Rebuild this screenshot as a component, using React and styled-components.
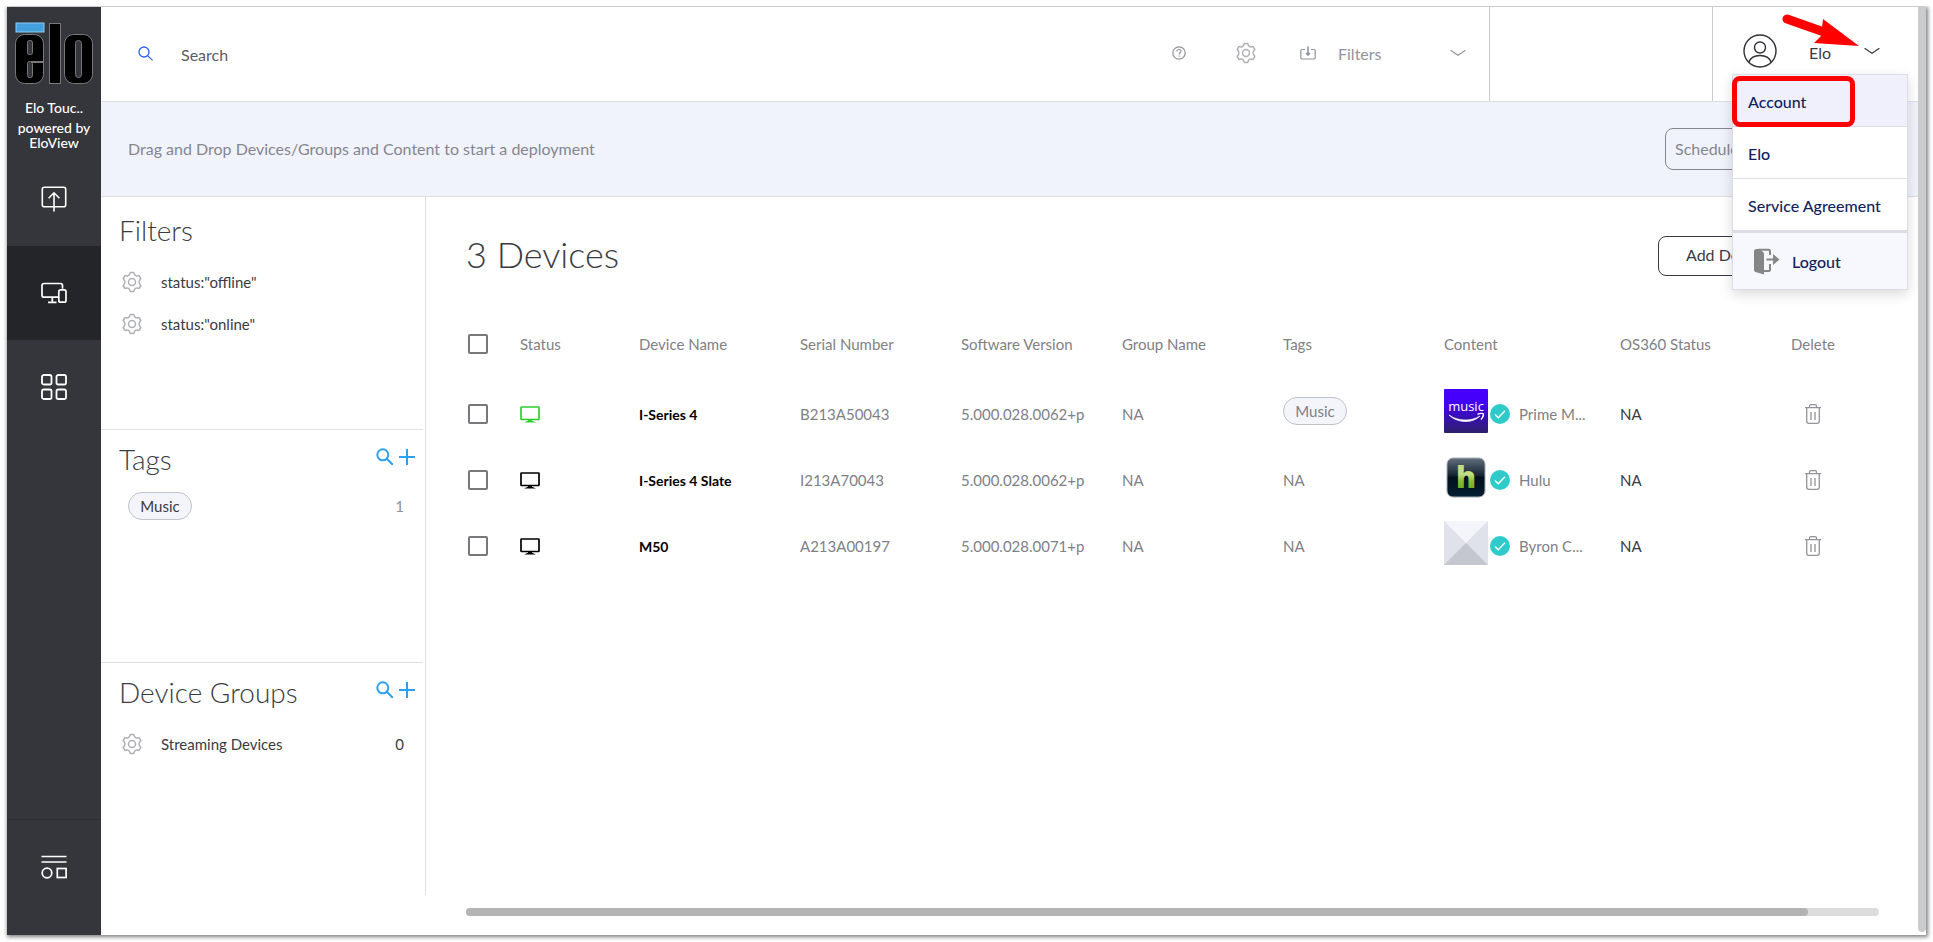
import React, { useState } from "react";
import styled, { createGlobalStyle } from "styled-components";

const GlobalStyle = createGlobalStyle`
  * {
    box-sizing: border-box;
  }
  body {
    margin: 0;
    background: #ffffff;
    color: #3a3b42;
    font-family: Lato, "Open Sans", sans-serif;
    font-size: 15px;
  }
  button, input, select {
    font: inherit;
    color: inherit;
  }
  button {
    padding: 0;
    border: 0;
    background: none;
    cursor: pointer;
  }
`;

const Page = styled.div`
  height: 100vh;
  min-height: 700px;
  padding: 7px;
`;

const Frame = styled.div`
  display: flex;
  height: 100%;
  background: #ffffff;
  box-shadow: 1px 1px 4px 1px rgba(0, 0, 0, 0.5);
  clip-path: inset(-1px -7px -7px -4px);
`;

const Sidebar = styled.nav`
  display: flex;
  flex-direction: column;
  flex: none;
  width: 94px;
  padding-bottom: 21px;
  background: #35363b;
  color: #ffffff;
`;

const Brand = styled.div`
  display: flex;
  flex-direction: column;
  align-items: center;
  height: 145px;
  padding-top: 15px;
  font-size: 14px;
  font-weight: 500;
  line-height: 15px;
  text-align: center;
`;

const BrandName = styled.div`
  margin: 14px 0 5px;
`;

const NavButton = styled.button`
  display: flex;
  align-items: center;
  justify-content: center;
  height: 94px;
  background: ${(p) => (p.$active ? "#242529" : "transparent")};
`;

const NavSpacer = styled.div`
  flex: 1;
  border-bottom: 1px solid #2e2f34;
`;

const Content = styled.div`
  display: flex;
  flex-direction: column;
  flex: 1;
  min-width: 0;
`;

const Header = styled.header`
  display: flex;
  flex: none;
  height: 95px;
  border-bottom: 1px solid #dfdfdf;
`;

const SearchBox = styled.label`
  display: flex;
  align-items: center;
  flex: 1;
  gap: 28px;
  padding: 0 0 2px 37px;
`;

const SearchInput = styled.input`
  width: 300px;
  padding: 3px 0 0;
  border: 0;
  outline: 0;
  background: none;
  font-size: 16px;
  &::placeholder {
    color: #5c5d63;
    opacity: 1;
  }
`;

const Tools = styled.div`
  display: flex;
  align-items: center;
  gap: 41px;
  padding: 0 23px 2px 0;
  color: #92939b;
`;

const ToolButton = styled.button`
  display: flex;
  align-items: center;
  justify-content: center;
  width: 26px;
  height: 26px;
`;

const FilterPicker = styled.label`
  display: flex;
  align-items: center;
  width: 166px;
`;

const FilterSelect = styled.select`
  flex: 1;
  margin-left: 22px;
  padding: 0;
  border: 0;
  appearance: none;
  background: none;
  font-size: 16px;
`;

const HeaderCell = styled.div`
  width: 223px;
  border-left: 1px solid #cccccc;
`;

const UserCell = styled.div`
  position: relative;
  width: 206px;
  border-left: 1px solid #cccccc;
`;

const UserButton = styled.button`
  display: flex;
  align-items: center;
  width: 100%;
  height: 88px;
  padding: 0 38px 0 30px;
  font-size: 16px;
`;

const UserName = styled.span`
  flex: 1;
  padding: 2px 0 0 32px;
  text-align: left;
`;

const Menu = styled.ul`
  position: absolute;
  z-index: 2;
  top: 67px;
  right: 10px;
  width: 176px;
  margin: 0;
  padding: 0;
  border: 1px solid #dcdde6;
  background: #ffffff;
  box-shadow: 0 4px 12px rgba(0, 0, 0, 0.15);
  list-style: none;
`;

const MenuItem = styled.li`
  position: relative;
  height: ${(p) => (p.$last ? 58 : 52)}px;
  border-top: ${(p) => (p.$last ? 2 : 0)}px solid #dcdde6;
  border-bottom: ${(p) => (p.$last ? 0 : 1)}px solid #dcdde6;
  background: ${(p) => p.$bg || "#ffffff"};
`;

const MenuLink = styled.a`
  display: flex;
  align-items: center;
  gap: 12px;
  height: 100%;
  padding: ${(p) => (p.$icon ? "0 0 0 20px" : "2px 0 0 15px")};
  color: #14235c;
  font-size: 16px;
  font-weight: 500;
  text-decoration: none;
  white-space: nowrap;
`;

const Highlight = styled.span`
  position: absolute;
  z-index: 3;
  top: 1px;
  left: -1px;
  width: 123px;
  height: 51px;
  border: 5px solid #fe0000;
  border-radius: 8px;
  pointer-events: none;
`;

const Arrow = styled.svg`
  position: absolute;
  z-index: 3;
  top: 6px;
  left: 69px;
  pointer-events: none;
`;

const Banner = styled.div`
  display: flex;
  align-items: center;
  justify-content: space-between;
  flex: none;
  height: 95px;
  padding: 0 39px 0 27px;
  border-bottom: 1px solid #dfdfdf;
  background: #f0f3fc;
  color: #85868f;
  font-size: 16px;
`;

const BannerText = styled.p`
  margin: 0;
  padding-bottom: 2px;
`;

const OutlineButton = styled.button`
  height: ${(p) => p.$height}px;
  width: ${(p) => p.$width}px;
  padding: 0 0 2px ${(p) => p.$pad}px;
  border: 1px solid currentColor;
  border-radius: 8px;
  font-size: 16px;
  text-align: left;
`;

const Body = styled.div`
  display: flex;
  flex: 1;
  min-height: 0;
`;

const Panel = styled.aside`
  display: flex;
  flex-direction: column;
  flex: none;
  width: 325px;
  margin-bottom: 40px;
  border-right: 1px solid #dfdfdf;
`;

const Section = styled.section`
  flex: 1;
  margin-right: 2px;
  padding: 0 7px 0 18px;
  border-bottom: 1px solid #dfdfdf;
  &:last-child {
    border-bottom: 0;
  }
`;

const SectionHead = styled.div`
  display: flex;
  align-items: center;
  height: ${(p) => (p.$first ? 64 : 60)}px;
  padding-top: ${(p) => (p.$first ? 4 : 0)}px;
`;

const SectionTitle = styled.h2`
  flex: 1;
  margin: 0;
  padding-bottom: 2px;
  font-size: 28px;
  font-weight: 300;
`;

const IconButton = styled.button`
  display: flex;
  margin: 0 0 6px 4px;
  color: #2f9ff0;
`;

const PanelRow = styled.div`
  display: flex;
  align-items: center;
  height: ${(p) => (p.$chip ? 32 : 42)}px;
  padding: 0 12px 0 ${(p) => (p.$chip ? 9 : 3)}px;
`;

const RowLabel = styled.span`
  flex: 1;
  padding-left: 19px;
`;

const RowCount = styled.span`
  margin-left: auto;
  color: ${(p) => (p.$muted ? "#8f9097" : "inherit")};
`;

const Chip = styled.span`
  display: flex;
  align-items: center;
  justify-content: center;
  width: 64px;
  height: 28px;
  border: 1px solid #c0c2cc;
  border-radius: 14px;
  background: #f4f5fb;
`;

const Main = styled.main`
  display: flex;
  flex-direction: column;
  flex: 1;
  min-width: 0;
  padding: 0 39px 19px 40px;
`;

const TitleBar = styled.div`
  display: flex;
  align-items: center;
  justify-content: space-between;
  height: 117px;
  flex: none;
`;

const Title = styled.h1`
  margin: 0;
  padding-bottom: 4px;
  font-size: 36px;
  font-weight: 300;
`;

const DeviceTable = styled.table`
  width: 100%;
  border-collapse: collapse;
  table-layout: fixed;
  color: #808186;
`;

const HeadCell = styled.th`
  width: ${(p) => p.$width}px;
  height: 67px;
  padding: 0 0 8px;
  font-weight: 400;
  text-align: left;
  white-space: nowrap;
`;

const Cell = styled.td`
  height: 66px;
  padding: 0;
  color: ${(p) => p.$color || "inherit"};
  font-size: ${(p) => (p.$bold ? 14 : 15)}px;
  font-weight: ${(p) => (p.$bold ? 700 : 400)};
  white-space: nowrap;
  > svg {
    display: block;
  }
  ${Chip} {
    margin-bottom: 6px;
  }
`;

const Check = styled.input`
  display: block;
  width: 20px;
  height: 20px;
  margin: 0 0 0 2px;
  border: 2px solid #77787c;
  border-radius: 2px;
  appearance: none;
  &:checked {
    background: #77787c;
  }
`;

const ContentCell = styled.div`
  display: flex;
  align-items: center;
`;

const Thumb = styled.svg`
  flex: none;
  margin: 0 2px 6px 0;
`;

const ContentName = styled.span`
  margin-left: 9px;
`;

const DeleteButton = styled.button`
  display: flex;
  justify-content: center;
  width: 44px;
  color: #92939b;
`;

const ScrollTrack = styled.div`
  height: 8px;
  margin-top: auto;
  border-radius: 4px;
  background: #dcdcdc;
`;

const ScrollThumb = styled.div`
  width: 95%;
  height: 8px;
  border-radius: 4px;
  background: #b4b4b4;
`;

const PageScroll = styled.div`
  flex: none;
  width: 8px;
  margin-bottom: 3px;
  border-radius: 0 0 4px 4px;
  background: #cbccce;
`;

const Logo = () => (
  <svg width="80" height="64" viewBox="14 22 80 64" role="img" aria-label="elo">
    <rect x="16" y="23" width="28" height="9" fill="#44a0dc" stroke="#8ccbf2" />
    <g fill="#000" stroke="#77787c">
      <rect x="15.5" y="34.5" width="28" height="49" rx="9" />
      <rect x="49.5" y="23.5" width="11" height="60" />
      <rect x="64.5" y="34.5" width="28" height="49" rx="9" />
    </g>
    <g fill="#35363b" stroke="#77787c">
      <rect x="27.5" y="40.5" width="5" height="14" rx="2" />
      <rect x="27.5" y="61.5" width="5" height="16" rx="2" />
      <rect x="75.5" y="40.5" width="6" height="37" rx="3" />
    </g>
    <rect x="31" y="61" width="13" height="2" fill="#77787c" />
  </svg>
);

const DeployIcon = () => (
  <svg width="26" height="26" viewBox="0 0 26 26" fill="none" stroke="#fff" strokeWidth="1.6">
    <rect x="1.3" y="1.3" width="23.4" height="19.4" rx="2" />
    <path d="M13 25.5V7M7.6 12.2 13 6.8l5.4 5.4" />
  </svg>
);

const DevicesIcon = () => (
  <svg width="26" height="22" viewBox="0 0 26 22" fill="none" stroke="#fff" strokeWidth="1.7">
    <path d="M17.5 15.2H3a2 2 0 0 1-2-2V3.5a2 2 0 0 1 2-2h16.5a2 2 0 0 1 2 2v3.2M11.3 15.2V20M7 20.3h8.5" />
    <rect x="17.8" y="7.8" width="7.2" height="12.4" rx="1.8" />
  </svg>
);

const GridIcon = () => (
  <svg width="26" height="26" viewBox="0 0 26 26" fill="none" stroke="#fff" strokeWidth="1.8">
    <rect x="1" y="1" width="9.5" height="9.5" rx="1.8" />
    <rect x="15.5" y="1" width="9.5" height="9.5" rx="1.8" />
    <rect x="1" y="15.5" width="9.5" height="9.5" rx="1.8" />
    <rect x="15.5" y="15.5" width="9.5" height="9.5" rx="1.8" />
  </svg>
);

const LayoutIcon = () => (
  <svg width="26" height="24" viewBox="0 0 26 24" fill="none" stroke="#fff" strokeWidth="1.7">
    <path d="M.5 1.5h25M.5 7h25" />
    <circle cx="6" cy="18" r="4.8" />
    <rect x="16.3" y="13.5" width="8.8" height="9" />
  </svg>
);

const SearchIcon = () => (
  <svg width="15" height="15" viewBox="0 0 15 15" fill="none" stroke="#2d62f0" strokeWidth="1.3">
    <circle cx="6" cy="6" r="5" />
    <path d="m9.6 9.6 5 4.8" />
  </svg>
);

const HelpIcon = () => (
  <svg width="14" height="14" viewBox="0 0 14 14" fill="none" stroke="currentColor" strokeWidth="1.2">
    <circle cx="7" cy="7" r="6.2" />
    <path d="M5 5.5c0-1.3.9-2 2-2s2 .7 2 1.8c0 1.5-1.9 1.5-1.9 3.2M7 9.5v1.2" />
  </svg>
);

const GearIcon = () => (
  <svg width="20" height="22" viewBox="0 0 20 22" fill="none" stroke="#b0b1b7" strokeWidth="1.5">
    <path
      d="M8.3 1.5h3.4l.9 2.2c.5.9 1.3 1.3 2.3 1.2l2.2-.3 1.7 2.900-1.300 1.800c-.7 1.100-.7 2.300 0 3.400l1.300 1.800-1.700 2.900-2.200-.3c-1-.1-1.800.3-2.300 1.200l-.9 2.200H8.300l-.9-2.200c-.5-.9-1.300-1.300-2.300-1.200l-2.200.3-1.700-2.900 1.300-1.800c.7-1.100.7-2.300 0-3.400L1.200 7.500l1.700-2.900 2.200.3c1 .1 1.800-.3 2.300-1.200z"
      strokeLinejoin="round"
    />
    <circle cx="10" cy="11" r="3.5" />
  </svg>
);

const InboxIcon = () => (
  <svg width="16" height="14" viewBox="0 0 16 14" fill="none" stroke="currentColor" strokeWidth="1.2">
    <path d="M5 3.5H2A1.2 1.2 0 0 0 .8 4.7v7.1A1.2 1.2 0 0 0 2 13h12a1.2 1.2 0 0 0 1.2-1.2V4.7A1.2 1.2 0 0 0 14 3.5h-3" />
    <path d="M8 .5v8M6 7l2 2 2-2" strokeWidth="1.6" />
  </svg>
);

const Chevron = () => (
  <svg width="16" height="8" viewBox="0 0 16 8" fill="none" stroke="currentColor" strokeWidth="1.2">
    <path d="m.6 1.200 7.400 5 7.400-5" />
  </svg>
);

const AvatarIcon = () => (
  <svg width="34" height="34" viewBox="0 0 34 34" fill="none" stroke="#2f3036" strokeWidth="1.4">
    <circle cx="17" cy="17" r="16" />
    <circle cx="17" cy="13.5" r="5.5" />
    <path d="M5.8 28.3C7.5 23.8 11.8 21.5 17 21.5s9.5 2.3 11.2 6.8" />
  </svg>
);

const LogoutIcon = () => (
  <svg width="27" height="27" viewBox="0 0 27 27" fill="none">
    <path d="M1 3.5A2.5 2.5 0 0 1 3.5 1H6l4 3a2 2 0 0 1 1 2v20.5L2.5 24A2 2 0 0 1 1 22z" fill="#868686" />
    <path d="M5 1.8h10.5A1.5 1.5 0 0 1 17 3.3V7M17 16v5.5a1.5 1.5 0 0 1-1.5 1.5H11" stroke="#868686" strokeWidth="2" />
    <path d="M13.5 10.5H20V6l6.5 5.5L20 17v-4.5h-6.5z" fill="#868686" />
  </svg>
);

const PanelSearchIcon = () => (
  <svg width="18" height="18" viewBox="0 0 18 18" fill="none" stroke="currentColor" strokeWidth="2">
    <circle cx="6.8" cy="6.8" r="5.5" />
    <path d="m10.8 10.8 6 6" />
  </svg>
);

const PlusIcon = () => (
  <svg width="18" height="18" viewBox="0 0 18 18" stroke="currentColor" strokeWidth="2">
    <path d="M9 1v16M1 9h16" />
  </svg>
);

const MonitorIcon = ({ color }) => (
  <svg width="20" height="17" viewBox="0 0 20 17">
    <rect x="1" y="1" width="18" height="12.5" rx=".5" fill="none" stroke={color} strokeWidth="1.7" />
    <path d="M8 13.5h4v1.3l4 1.700H4l4-1.700z" fill={color} />
  </svg>
);

const CheckBadge = () => (
  <svg width="20" height="20" viewBox="0 0 20 20" fill="none">
    <circle cx="10" cy="10" r="10" fill="#2fcbcb" />
    <path d="m5 10.5 3.300 3.300L15 6.800" stroke="#fff" strokeWidth="1.4" />
  </svg>
);

const TrashIcon = () => (
  <svg width="16" height="20" viewBox="0 0 16 20" fill="none" stroke="currentColor" strokeWidth="1.3">
    <path d="M0 3.7h16M4.5 3.5V2A1.3 1.3 0 0 1 5.8.7h4.4A1.3 1.3 0 0 1 11.5 2v1.5" />
    <path d="M1.7 4v13A2.3 2.3 0 0 0 4 19.3h8a2.3 2.3 0 0 0 2.3-2.3V4M6 8v8M10 8v8" />
  </svg>
);

const MusicThumb = () => (
  <Thumb width="44" height="44" viewBox="0 0 44 44">
    <defs>
      <linearGradient id="prime" x1="0" y1="0" x2="0" y2="1">
        <stop offset=".3" stopColor="#4400fa" />
        <stop offset="1" stopColor="#2c2068" />
      </linearGradient>
    </defs>
    <rect width="44" height="44" rx="1" fill="url(#prime)" />
    <text x="22" y="22" fill="#fff" fontSize="13" fontFamily="Open Sans" textAnchor="middle">
      music
    </text>
    <path d="M5 26c8 6 22 7 31 1-8 8-23 7-31-1z" fill="#fff" stroke="#fff" strokeWidth=".7" />
    <path d="M33.5 25.3c3-1.4 5.6-1 5.8-.5.3.8-.5 3.7-2.3 5.7" fill="none" stroke="#fff" strokeWidth="1.3" />
  </Thumb>
);

const HuluThumb = () => (
  <Thumb width="44" height="44" viewBox="0 0 44 44">
    <defs>
      <linearGradient id="hulu" x1="0" y1="0" x2="0" y2="1">
        <stop offset="0" stopColor="#63717f" />
        <stop offset=".45" stopColor="#15232f" />
        <stop offset=".5" stopColor="#020f1b" />
        <stop offset="1" stopColor="#032033" />
      </linearGradient>
      <linearGradient id="huluLetter" x1="0" y1="0" x2="0" y2="1">
        <stop offset=".45" stopColor="#c2dd82" />
        <stop offset=".6" stopColor="#8cbe36" />
        <stop offset="1" stopColor="#4f9c0c" />
      </linearGradient>
    </defs>
    <rect x="3" y="3" width="38" height="39" rx="6" fill="url(#hulu)" stroke="#a8aeb5" />
    <text x="22" y="33" fill="url(#huluLetter)" fontSize="30" fontWeight="800" fontFamily="Open Sans" textAnchor="middle">
      h
    </text>
  </Thumb>
);

const BlankThumb = () => (
  <Thumb width="44" height="44" viewBox="0 0 44 44">
    <rect width="44" height="44" fill="#dfe2ea" />
    <path d="M0 0h44L22 22z" fill="#f3f5fa" />
    <path d="M0 44h44L22 22z" fill="#c4c6d0" />
  </Thumb>
);

const columns = [
  ["Status", 119],
  ["Device Name", 161],
  ["Serial Number", 161],
  ["Software Version", 161],
  ["Group Name", 161],
  ["Tags", 161],
  ["Content", 176],
  ["OS360 Status", 171],
  ["Delete", 88],
];

const devices = [
  {
    name: "I-Series 4",
    serial: "B213A50043",
    version: "5.000.028.0062+p",
    online: true,
    tag: "Music",
    content: "Prime M...",
    thumb: <MusicThumb />,
  },
  {
    name: "I-Series 4 Slate",
    serial: "I213A70043",
    version: "5.000.028.0062+p",
    content: "Hulu",
    thumb: <HuluThumb />,
  },
  {
    name: "M50",
    serial: "A213A00197",
    version: "5.000.028.0071+p",
    content: "Byron C...",
    thumb: <BlankThumb />,
  },
];

const SectionTools = ({ name }) => (
  <>
    <IconButton aria-label={`Search ${name}`}>
      <PanelSearchIcon />
    </IconButton>
    <IconButton aria-label={`Add ${name}`}>
      <PlusIcon />
    </IconButton>
  </>
);

function TopBar() {
  const [open, setOpen] = useState(true);

  return (
    <Header>
      <SearchBox>
        <SearchIcon />
        <SearchInput type="text" placeholder="Search" aria-label="Search" />
      </SearchBox>
      <Tools>
        <ToolButton aria-label="Help">
          <HelpIcon />
        </ToolButton>
        <ToolButton aria-label="Settings">
          <GearIcon />
        </ToolButton>
        <FilterPicker>
          <InboxIcon />
          <FilterSelect aria-label="Filters">
            <option>Filters</option>
          </FilterSelect>
          <Chevron />
        </FilterPicker>
      </Tools>
      <HeaderCell />
      <UserCell>
        <UserButton aria-expanded={open} onClick={() => setOpen(!open)}>
          <AvatarIcon />
          <UserName>Elo</UserName>
          <Chevron />
        </UserButton>
        {open && (
          <Menu>
            <MenuItem $bg="#f0f0fd">
              <MenuLink href="#account">Account</MenuLink>
              <Highlight />
            </MenuItem>
            <MenuItem>
              <MenuLink href="#elo">Elo</MenuLink>
            </MenuItem>
            <MenuItem>
              <MenuLink href="#agreement">Service Agreement</MenuLink>
            </MenuItem>
            <MenuItem $last $bg="#f7f8fd">
              <MenuLink href="#logout" $icon>
                <LogoutIcon />
                Logout
              </MenuLink>
            </MenuItem>
          </Menu>
        )}
        <Arrow width="78" height="36" viewBox="0 0 78 36">
          <path d="M5 6 42 19" stroke="#fe0000" strokeWidth="9" strokeLinecap="round" />
          <path d="M41 6 77 33 32 30 39 23z" fill="#fe0000" />
        </Arrow>
      </UserCell>
    </Header>
  );
}

function FilterPanel() {
  return (
    <Panel>
      <Section>
        <SectionHead $first>
          <SectionTitle>Filters</SectionTitle>
        </SectionHead>
        {["offline", "online"].map((status) => (
          <PanelRow key={status}>
            <GearIcon />
            <RowLabel>status:"{status}"</RowLabel>
          </PanelRow>
        ))}
      </Section>
      <Section>
        <SectionHead>
          <SectionTitle>Tags</SectionTitle>
          <SectionTools name="tags" />
        </SectionHead>
        <PanelRow $chip>
          <Chip>Music</Chip>
          <RowCount $muted>1</RowCount>
        </PanelRow>
      </Section>
      <Section>
        <SectionHead>
          <SectionTitle>Device Groups</SectionTitle>
          <SectionTools name="device groups" />
        </SectionHead>
        <PanelRow>
          <GearIcon />
          <RowLabel>Streaming Devices</RowLabel>
          <RowCount>0</RowCount>
        </PanelRow>
      </Section>
    </Panel>
  );
}

function Devices() {
  return (
    <Main>
      <TitleBar>
        <Title>3 Devices</Title>
        <OutlineButton $height={40} $width={221} $pad={27}>
          Add Device
        </OutlineButton>
      </TitleBar>
      <DeviceTable>
        <thead>
          <tr>
            <HeadCell $width={54}>
              <Check type="checkbox" aria-label="Select all" />
            </HeadCell>
            {columns.map(([label, width]) => (
              <HeadCell key={label} $width={width}>
                {label}
              </HeadCell>
            ))}
          </tr>
        </thead>
        <tbody>
          {devices.map((device) => (
            <tr key={device.name}>
              <Cell>
                <Check type="checkbox" aria-label={`Select ${device.name}`} />
              </Cell>
              <Cell>
                <MonitorIcon color={device.online ? "#2fd02f" : "#000000"} />
              </Cell>
              <Cell $bold $color="#000000">
                {device.name}
              </Cell>
              <Cell>{device.serial}</Cell>
              <Cell>{device.version}</Cell>
              <Cell>NA</Cell>
              <Cell>{device.tag ? <Chip>{device.tag}</Chip> : "NA"}</Cell>
              <Cell>
                <ContentCell>
                  {device.thumb}
                  <CheckBadge />
                  <ContentName>{device.content}</ContentName>
                </ContentCell>
              </Cell>
              <Cell $color="#3a3b42">NA</Cell>
              <Cell>
                <DeleteButton aria-label={`Delete ${device.name}`}>
                  <TrashIcon />
                </DeleteButton>
              </Cell>
            </tr>
          ))}
        </tbody>
      </DeviceTable>
      <ScrollTrack>
        <ScrollThumb />
      </ScrollTrack>
    </Main>
  );
}

export default function App() {
  return (
    <Page>
      <GlobalStyle />
      <Frame>
        <Sidebar>
          <Brand>
            <Logo />
            <BrandName>Elo Touc..</BrandName>
            <div>
              powered by
              <br />
              EloView
            </div>
          </Brand>
          <NavButton aria-label="Deploy">
            <DeployIcon />
          </NavButton>
          <NavButton $active aria-label="Devices">
            <DevicesIcon />
          </NavButton>
          <NavButton aria-label="Content">
            <GridIcon />
          </NavButton>
          <NavSpacer />
          <NavButton aria-label="Layouts">
            <LayoutIcon />
          </NavButton>
        </Sidebar>
        <Content>
          <TopBar />
          <Banner>
            <BannerText>
              Drag and Drop Devices/Groups and Content to start a deployment
            </BannerText>
            <OutlineButton $height={42} $width={214} $pad={9}>
              Schedule
            </OutlineButton>
          </Banner>
          <Body>
            <FilterPanel />
            <Devices />
          </Body>
        </Content>
        <PageScroll />
      </Frame>
    </Page>
  );
}
